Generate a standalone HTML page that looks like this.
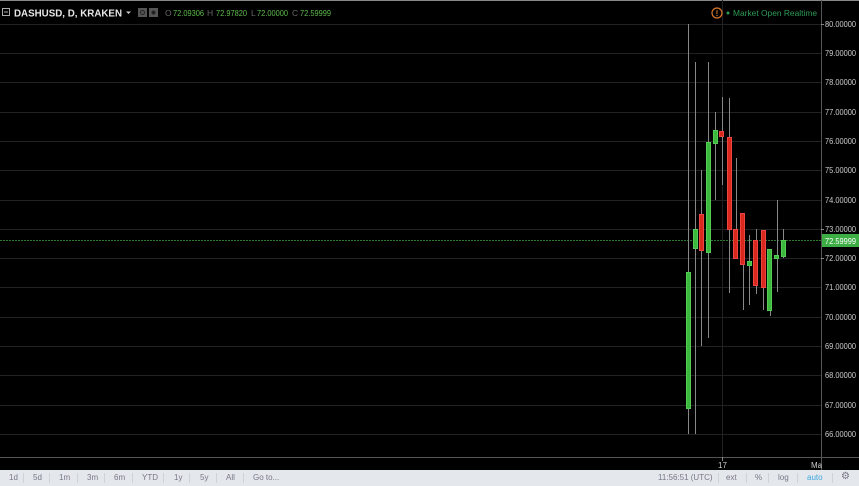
<!DOCTYPE html>
<html><head><meta charset="utf-8"><style>
html,body{margin:0;padding:0;background:#000;width:859px;height:486px;overflow:hidden;font-family:"Liberation Sans",sans-serif}
.tb{position:absolute;left:0;top:470px;width:859px;height:16px;background:#e4e7eb;font-size:8px;color:#778}
.tb span{position:absolute;top:3px}
.sep{position:absolute;top:3px;width:1px;height:10px;background:#cfd3d8}
</style></head><body>
<svg width="859" height="470" style="position:absolute;left:0;top:0" font-family="Liberation Sans, sans-serif">
<rect x="0" y="0" width="859" height="1" fill="#888"/>
<g stroke="#222" stroke-width="1">
<line x1="0" y1="24.5" x2="821" y2="24.5"/><line x1="0" y1="53.5" x2="821" y2="53.5"/><line x1="0" y1="82.5" x2="821" y2="82.5"/><line x1="0" y1="112.5" x2="821" y2="112.5"/><line x1="0" y1="141.5" x2="821" y2="141.5"/><line x1="0" y1="170.5" x2="821" y2="170.5"/><line x1="0" y1="200.5" x2="821" y2="200.5"/><line x1="0" y1="229.5" x2="821" y2="229.5"/><line x1="0" y1="258.5" x2="821" y2="258.5"/><line x1="0" y1="287.5" x2="821" y2="287.5"/><line x1="0" y1="317.5" x2="821" y2="317.5"/><line x1="0" y1="346.5" x2="821" y2="346.5"/><line x1="0" y1="375.5" x2="821" y2="375.5"/><line x1="0" y1="405.5" x2="821" y2="405.5"/><line x1="0" y1="434.5" x2="821" y2="434.5"/>
<line x1="722.5" y1="0" x2="722.5" y2="457"/>
</g>
<line x1="0" y1="240.5" x2="821" y2="240.5" stroke="#2a7a2a" stroke-dasharray="2,1"/>
<line x1="821.5" y1="0" x2="821.5" y2="470" stroke="#555"/>
<line x1="0" y1="457.5" x2="859" y2="457.5" stroke="#555"/>
<line x1="722.5" y1="457" x2="722.5" y2="461" stroke="#888"/>
<g stroke="#888" stroke-width="1">
<line x1="688.5" y1="24" x2="688.5" y2="434"/>
<line x1="695.5" y1="62" x2="695.5" y2="434"/>
<line x1="701.5" y1="170" x2="701.5" y2="346"/>
<line x1="708.5" y1="62" x2="708.5" y2="338"/>
<line x1="715.5" y1="112" x2="715.5" y2="200"/>
<line x1="722.5" y1="97" x2="722.5" y2="185"/>
<line x1="729.5" y1="98" x2="729.5" y2="293"/>
<line x1="736.5" y1="158" x2="736.5" y2="258"/>
<line x1="743.5" y1="213" x2="743.5" y2="310"/>
<line x1="749.5" y1="235" x2="749.5" y2="305"/>
<line x1="756.5" y1="229" x2="756.5" y2="294"/>
<line x1="763.5" y1="230" x2="763.5" y2="310"/>
<line x1="770.5" y1="249" x2="770.5" y2="316"/>
<line x1="777.5" y1="200" x2="777.5" y2="292"/>
<line x1="783.5" y1="229" x2="783.5" y2="258"/>
</g>
<g stroke-width="1">
<rect x="686.5" y="272.5" width="4" height="136" fill="#3cb83c" stroke="#5c5"/>
<rect x="693.5" y="229.5" width="4" height="19" fill="#3cb83c" stroke="#5c5"/>
<rect x="699.5" y="214.5" width="4" height="36" fill="#d8291c" stroke="#e44"/>
<rect x="706.5" y="142.5" width="4" height="110" fill="#3cb83c" stroke="#5c5"/>
<rect x="713.5" y="130.5" width="4" height="13" fill="#3cb83c" stroke="#5c5"/>
<rect x="719.5" y="131.5" width="4" height="5" fill="#d8291c" stroke="#e44"/>
<rect x="727.5" y="137.5" width="4" height="92" fill="#d8291c" stroke="#e44"/>
<rect x="733.5" y="229.5" width="4" height="29" fill="#d8291c" stroke="#e44"/>
<rect x="740.5" y="213.5" width="4" height="51" fill="#d8291c" stroke="#e44"/>
<rect x="747.5" y="261.5" width="4" height="4" fill="#3cb83c" stroke="#5c5"/>
<rect x="753.5" y="240.5" width="4" height="45" fill="#d8291c" stroke="#e44"/>
<rect x="761.5" y="230.5" width="4" height="57" fill="#d8291c" stroke="#e44"/>
<rect x="767.5" y="249.5" width="4" height="61" fill="#3cb83c" stroke="#5c5"/>
<rect x="774.5" y="255.5" width="4" height="3" fill="#3cb83c" stroke="#5c5"/>
<rect x="781.5" y="240.5" width="4" height="16" fill="#3cb83c" stroke="#5c5"/>
</g>
<g font-size="8" fill="#ccc" lengthAdjust="spacingAndGlyphs">
<text x="825" y="27" textLength="31" lengthAdjust="spacingAndGlyphs">80.00000</text><text x="825" y="56" textLength="31" lengthAdjust="spacingAndGlyphs">79.00000</text><text x="825" y="85" textLength="31" lengthAdjust="spacingAndGlyphs">78.00000</text><text x="825" y="115" textLength="31" lengthAdjust="spacingAndGlyphs">77.00000</text><text x="825" y="144" textLength="31" lengthAdjust="spacingAndGlyphs">76.00000</text><text x="825" y="173" textLength="31" lengthAdjust="spacingAndGlyphs">75.00000</text><text x="825" y="203" textLength="31" lengthAdjust="spacingAndGlyphs">74.00000</text><text x="825" y="232" textLength="31" lengthAdjust="spacingAndGlyphs">73.00000</text><text x="825" y="261" textLength="31" lengthAdjust="spacingAndGlyphs">72.00000</text><text x="825" y="290" textLength="31" lengthAdjust="spacingAndGlyphs">71.00000</text><text x="825" y="320" textLength="31" lengthAdjust="spacingAndGlyphs">70.00000</text><text x="825" y="349" textLength="31" lengthAdjust="spacingAndGlyphs">69.00000</text><text x="825" y="378" textLength="31" lengthAdjust="spacingAndGlyphs">68.00000</text><text x="825" y="408" textLength="31" lengthAdjust="spacingAndGlyphs">67.00000</text><text x="825" y="437" textLength="31" lengthAdjust="spacingAndGlyphs">66.00000</text>
</g>
<g stroke="#888"><line x1="821" y1="24.5" x2="824" y2="24.5"/><line x1="821" y1="229.5" x2="824" y2="229.5"/><line x1="821" y1="258.5" x2="824" y2="258.5"/></g>
<rect x="822" y="234" width="37" height="13" fill="#3cae44"/>
<text x="825" y="244" font-size="8" fill="#fff" textLength="31" lengthAdjust="spacingAndGlyphs">72.59999</text>
<text x="718" y="468" font-size="8" fill="#ccc">17</text>
<text x="811" y="468" font-size="8" fill="#ccc">Ma</text>
<rect x="2.5" y="8.5" width="7" height="7" fill="none" stroke="#aaa"/><line x1="4" y1="12" x2="8" y2="12" stroke="#aaa"/>
<text x="14" y="16.5" font-size="10.5" font-weight="bold" fill="#e8e8e8" textLength="108" lengthAdjust="spacingAndGlyphs">DASHUSD, D, KRAKEN</text>
<path d="M126 11.5 L131 11.5 L128.5 14 Z" fill="#ccc"/>
<rect x="138" y="8" width="9" height="9" fill="#555"/><rect x="149" y="8" width="9" height="9" fill="#555"/>
<circle cx="142.5" cy="12.5" r="2" fill="none" stroke="#222"/><circle cx="153.5" cy="12.5" r="2" fill="#222"/>
<g font-size="8.5"><text x="165" y="16" fill="#666">O</text><text x="173" y="16" fill="#5dbb4a" textLength="31" lengthAdjust="spacingAndGlyphs">72.09306</text><text x="207" y="16" fill="#666">H</text><text x="216" y="16" fill="#5dbb4a" textLength="31" lengthAdjust="spacingAndGlyphs">72.97820</text><text x="251" y="16" fill="#666">L</text><text x="257" y="16" fill="#5dbb4a" textLength="31" lengthAdjust="spacingAndGlyphs">72.00000</text><text x="292" y="16" fill="#666">C</text><text x="300" y="16" fill="#5dbb4a" textLength="31" lengthAdjust="spacingAndGlyphs">72.59999</text></g>
<circle cx="717" cy="13" r="5" fill="none" stroke="#d9772b" stroke-width="1.2"/><line x1="717" y1="10" x2="717" y2="14" stroke="#d9772b"/><circle cx="717" cy="15.5" r="0.7" fill="#d9772b"/>
<circle cx="728" cy="13" r="1.5" fill="#2c9a55"/>
<text x="733" y="16" font-size="8.5" fill="#2c9a55" textLength="84" lengthAdjust="spacingAndGlyphs">Market Open  Realtime</text>
</svg>
<div class="tb">
<span style="left:9px">1d</span><div class="sep" style="left:23px"></div>
<span style="left:33px">5d</span><div class="sep" style="left:49px"></div>
<span style="left:59px">1m</span><div class="sep" style="left:77px"></div>
<span style="left:87px">3m</span><div class="sep" style="left:104px"></div>
<span style="left:114px">6m</span><div class="sep" style="left:132px"></div>
<span style="left:142px">YTD</span><div class="sep" style="left:163px"></div>
<span style="left:174px">1y</span><div class="sep" style="left:189px"></div>
<span style="left:200px">5y</span><div class="sep" style="left:216px"></div>
<span style="left:226px">All</span><div class="sep" style="left:243px"></div>
<span style="left:253px">Go to...</span>
<span style="left:658px">11:56:51 (UTC)</span><div class="sep" style="left:718px"></div>
<span style="left:726px">ext</span><div class="sep" style="left:746px"></div>
<span style="left:755px">%</span><div class="sep" style="left:768px"></div>
<span style="left:778px">log</span><div class="sep" style="left:797px"></div>
<span style="left:807px;color:#3ea8e0">auto</span><div class="sep" style="left:832px"></div>
<span style="left:841px;font-size:10px;top:1px">⚙</span>
</div>
</body></html>
